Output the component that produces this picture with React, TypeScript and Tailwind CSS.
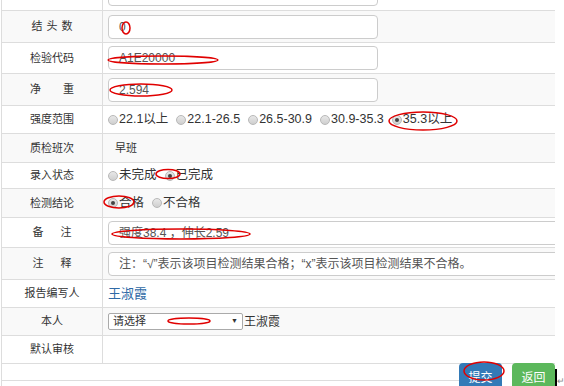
import React from 'react';

const font = "font-['Liberation_Sans','Noto_Sans_CJK_SC',sans-serif]";

function Radio({ checked = false }: { checked?: boolean }) {
  return (
    <span className="relative inline-flex h-[10px] w-[10px] shrink-0 items-center justify-center rounded-full border border-[#b8b8b8] bg-gradient-to-b from-[#e8e8e8] to-[#cfcfcf]">
      {checked && <span className="h-[4px] w-[4px] rounded-full bg-[#444]" />}
    </span>
  );
}

function RadioGroup({ options, checked }: { options: string[]; checked: number }) {
  return (
    <div className="flex items-center gap-[8px] pl-[5px] text-[12.5px] text-[#333]">
      {options.map((o, i) => (
        <label key={o} className="flex items-center gap-[1px]">
          <Radio checked={i === checked} />
          <span>{o}</span>
        </label>
      ))}
    </div>
  );
}

function Label({ chars, gap = 0 }: { chars: string[]; gap?: number }) {
  const gaps: Record<number, string> = { 0: 'gap-0', 4: 'gap-[4px]', 17: 'gap-[17px]', 22: 'gap-[22px]' };
  return (
    <div className={`flex w-[101px] shrink-0 items-center justify-center border-r border-[#ddd] text-[11px] text-[#333] ${gaps[gap]}`}>
      {chars.map((c, i) => (
        <span key={i}>{c}</span>
      ))}
    </div>
  );
}

function Row({
  label,
  gap,
  h,
  striped,
  children,
}: {
  label: string[];
  gap?: number;
  h: string;
  striped?: boolean;
  children?: React.ReactNode;
}) {
  return (
    <div className={`flex border-t border-[#ddd] ${h} ${striped ? 'bg-[#f9f9f9]' : 'bg-white'}`}>
      <Label chars={label} gap={gap} />
      <div className="flex min-w-0 flex-1 items-center overflow-hidden">{children}</div>
    </div>
  );
}

function TextBox({ value, wide = false }: { value: string; wide?: boolean }) {
  return (
    <div
      className={`ml-[5px] flex h-[24px] shrink-0 items-center rounded-[4px] border border-[#ccc] bg-white pl-[10px] text-[12px] text-[#555] ${
        wide ? 'w-[470px]' : 'w-[270px]'
      }`}
    >
      {value}
    </div>
  );
}

export default function App() {
  return (
    <div className={`relative h-[386px] w-[564px] overflow-hidden bg-white ${font}`}>
      <div className="ml-[1px] w-[554px] border-l border-[#ddd]">
        <div className="flex h-[10px] overflow-hidden bg-white">
          <div className="w-[101px] shrink-0 border-r border-[#ddd]" />
          <div className="-mt-[18px] flex items-start">
            <TextBox value="" />
          </div>
        </div>
        <Row label={['结', '头', '数']} gap={4} h="h-[32px]" striped>
          <TextBox value="0" />
        </Row>
        <Row label={['检验代码']} h="h-[31px]">
          <TextBox value="A1E20000" />
        </Row>
        <Row label={['净', '重']} gap={22} h="h-[32px]" striped>
          <TextBox value="2.594" />
        </Row>
        <Row label={['强度范围']} h="h-[28px]">
          <RadioGroup options={['22.1以上', '22.1-26.5', '26.5-30.9', '30.9-35.3', '35.3以上']} checked={4} />
        </Row>
        <Row label={['质检班次']} h="h-[29px]" striped>
          <span className="pl-[12px] text-[11px] text-[#333]">早班</span>
        </Row>
        <Row label={['录入状态']} h="h-[26px]">
          <RadioGroup options={['未完成', '已完成']} checked={1} />
        </Row>
        <Row label={['检测结论']} h="h-[29px]" striped>
          <RadioGroup options={['合格', '不合格']} checked={0} />
        </Row>
        <Row label={['备', '注']} gap={17} h="h-[30px]">
          <TextBox value="强度38.4 ，伸长2.59" wide />
        </Row>
        <Row label={['注', '释']} gap={17} h="h-[32px]" striped>
          <TextBox value="注：“√”表示该项目检测结果合格；“x”表示该项目检测结果不合格。" wide />
        </Row>
        <Row label={['报告编写人']} h="h-[28px]">
          <span className="pl-[5px] text-[13px] text-[#2f6aa6]">王淑霞</span>
        </Row>
        <Row label={['本人']} h="h-[28px]" striped>
          <div className="ml-[5px] flex h-[17px] w-[135px] items-center justify-between rounded-[2px] border border-[#aaa] bg-white px-[4px] text-[11px] text-[#333]">
            <span>请选择</span>
            <span className="text-[7px]">▼</span>
          </div>
          <span className="pl-[1px] text-[12px] text-[#333]">王淑霞</span>
        </Row>
        <Row label={['默认审核']} h="h-[28px]" />
        <div className="flex border-t border-[#ddd]">
          <div className="h-[17px] flex-1 border-b border-[#ddd]" />
          <div className="-mt-[1px] flex items-start gap-[10px]">
            <button className="flex h-[30px] w-[43px] justify-center rounded-[4px] bg-[#337ab7] pt-[6px] text-[12px] text-white">
              提交
            </button>
            <button className="flex h-[30px] w-[43px] justify-center rounded-[4px] bg-[#5cb85c] pt-[6px] text-[12px] text-white">
              返回
            </button>
          </div>
        </div>
      </div>
      <div className="absolute left-[555px] top-[369px] flex items-end">
        <span className="h-[17px] w-[2px] bg-black" />
        <span className="text-[9px] leading-none text-[#888]">↵</span>
      </div>
      <svg className="pointer-events-none absolute left-0 top-0" width="564" height="386" viewBox="0 0 564 386">
        <g fill="none" stroke="#e00000" strokeWidth="1.5">
          <ellipse cx="126" cy="28" rx="4" ry="6" />
          <ellipse cx="163" cy="60" rx="55" ry="4" />
          <ellipse cx="141" cy="90" rx="31" ry="6" />
          <ellipse cx="423" cy="121" rx="34" ry="9" />
          <ellipse cx="168" cy="174" rx="12" ry="4.5" />
          <ellipse cx="119" cy="202" rx="15" ry="6" />
          <ellipse cx="181" cy="234" rx="69" ry="5" />
          <ellipse cx="189" cy="321" rx="21" ry="3" />
          <ellipse cx="484" cy="371" rx="20" ry="9" />
        </g>
      </svg>
    </div>
  );
}
